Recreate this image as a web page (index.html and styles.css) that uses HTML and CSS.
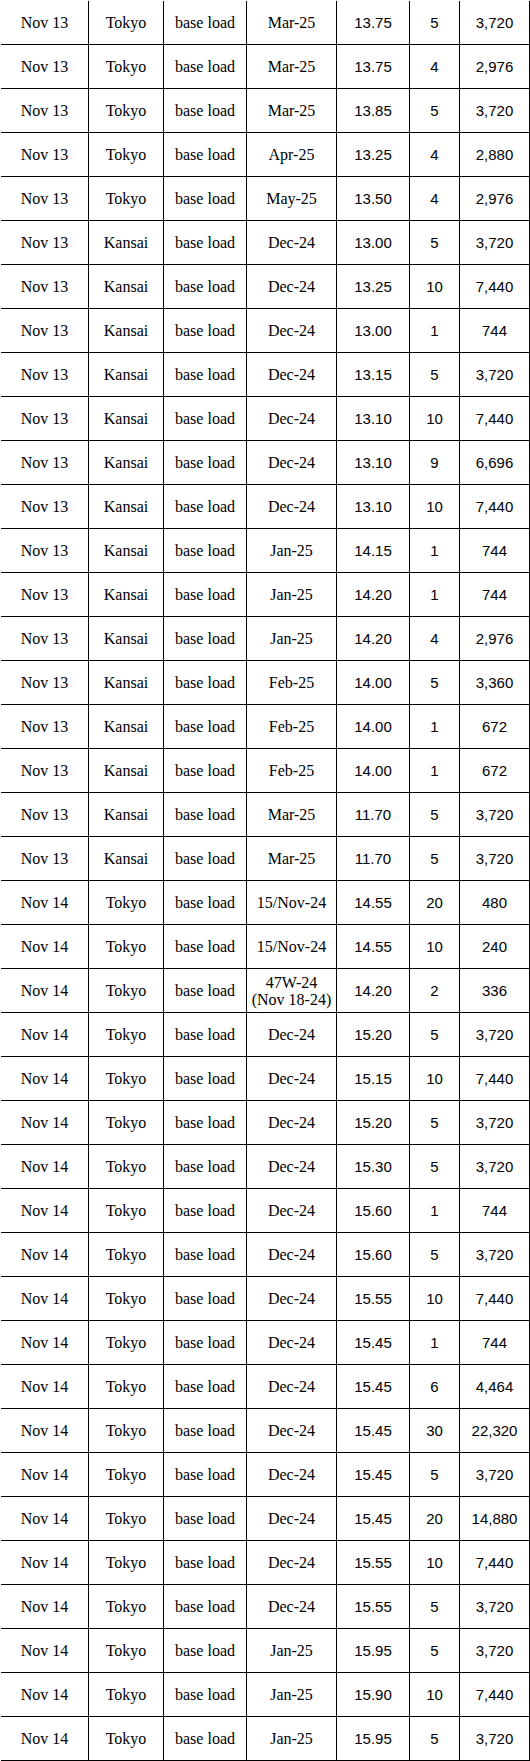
FILE: index.html
```html
<!DOCTYPE html>
<html>
<head>
<meta charset="utf-8">
<link rel="stylesheet" href="styles.css">
</head>
<body>
<table class="trades">
<tbody>
<tr><td class="c1">Nov 13</td><td class="c2">Tokyo</td><td class="c3">base load</td><td class="c4">Mar-25</td><td class="c5">13.75</td><td class="c6">5</td><td class="c7">3,720</td></tr>
<tr><td class="c1">Nov 13</td><td class="c2">Tokyo</td><td class="c3">base load</td><td class="c4">Mar-25</td><td class="c5">13.75</td><td class="c6">4</td><td class="c7">2,976</td></tr>
<tr><td class="c1">Nov 13</td><td class="c2">Tokyo</td><td class="c3">base load</td><td class="c4">Mar-25</td><td class="c5">13.85</td><td class="c6">5</td><td class="c7">3,720</td></tr>
<tr><td class="c1">Nov 13</td><td class="c2">Tokyo</td><td class="c3">base load</td><td class="c4">Apr-25</td><td class="c5">13.25</td><td class="c6">4</td><td class="c7">2,880</td></tr>
<tr><td class="c1">Nov 13</td><td class="c2">Tokyo</td><td class="c3">base load</td><td class="c4">May-25</td><td class="c5">13.50</td><td class="c6">4</td><td class="c7">2,976</td></tr>
<tr><td class="c1">Nov 13</td><td class="c2">Kansai</td><td class="c3">base load</td><td class="c4">Dec-24</td><td class="c5">13.00</td><td class="c6">5</td><td class="c7">3,720</td></tr>
<tr><td class="c1">Nov 13</td><td class="c2">Kansai</td><td class="c3">base load</td><td class="c4">Dec-24</td><td class="c5">13.25</td><td class="c6">10</td><td class="c7">7,440</td></tr>
<tr><td class="c1">Nov 13</td><td class="c2">Kansai</td><td class="c3">base load</td><td class="c4">Dec-24</td><td class="c5">13.00</td><td class="c6">1</td><td class="c7">744</td></tr>
<tr><td class="c1">Nov 13</td><td class="c2">Kansai</td><td class="c3">base load</td><td class="c4">Dec-24</td><td class="c5">13.15</td><td class="c6">5</td><td class="c7">3,720</td></tr>
<tr><td class="c1">Nov 13</td><td class="c2">Kansai</td><td class="c3">base load</td><td class="c4">Dec-24</td><td class="c5">13.10</td><td class="c6">10</td><td class="c7">7,440</td></tr>
<tr><td class="c1">Nov 13</td><td class="c2">Kansai</td><td class="c3">base load</td><td class="c4">Dec-24</td><td class="c5">13.10</td><td class="c6">9</td><td class="c7">6,696</td></tr>
<tr><td class="c1">Nov 13</td><td class="c2">Kansai</td><td class="c3">base load</td><td class="c4">Dec-24</td><td class="c5">13.10</td><td class="c6">10</td><td class="c7">7,440</td></tr>
<tr><td class="c1">Nov 13</td><td class="c2">Kansai</td><td class="c3">base load</td><td class="c4">Jan-25</td><td class="c5">14.15</td><td class="c6">1</td><td class="c7">744</td></tr>
<tr><td class="c1">Nov 13</td><td class="c2">Kansai</td><td class="c3">base load</td><td class="c4">Jan-25</td><td class="c5">14.20</td><td class="c6">1</td><td class="c7">744</td></tr>
<tr><td class="c1">Nov 13</td><td class="c2">Kansai</td><td class="c3">base load</td><td class="c4">Jan-25</td><td class="c5">14.20</td><td class="c6">4</td><td class="c7">2,976</td></tr>
<tr><td class="c1">Nov 13</td><td class="c2">Kansai</td><td class="c3">base load</td><td class="c4">Feb-25</td><td class="c5">14.00</td><td class="c6">5</td><td class="c7">3,360</td></tr>
<tr><td class="c1">Nov 13</td><td class="c2">Kansai</td><td class="c3">base load</td><td class="c4">Feb-25</td><td class="c5">14.00</td><td class="c6">1</td><td class="c7">672</td></tr>
<tr><td class="c1">Nov 13</td><td class="c2">Kansai</td><td class="c3">base load</td><td class="c4">Feb-25</td><td class="c5">14.00</td><td class="c6">1</td><td class="c7">672</td></tr>
<tr><td class="c1">Nov 13</td><td class="c2">Kansai</td><td class="c3">base load</td><td class="c4">Mar-25</td><td class="c5">11.70</td><td class="c6">5</td><td class="c7">3,720</td></tr>
<tr><td class="c1">Nov 13</td><td class="c2">Kansai</td><td class="c3">base load</td><td class="c4">Mar-25</td><td class="c5">11.70</td><td class="c6">5</td><td class="c7">3,720</td></tr>
<tr><td class="c1">Nov 14</td><td class="c2">Tokyo</td><td class="c3">base load</td><td class="c4">15/Nov-24</td><td class="c5">14.55</td><td class="c6">20</td><td class="c7">480</td></tr>
<tr><td class="c1">Nov 14</td><td class="c2">Tokyo</td><td class="c3">base load</td><td class="c4">15/Nov-24</td><td class="c5">14.55</td><td class="c6">10</td><td class="c7">240</td></tr>
<tr><td class="c1">Nov 14</td><td class="c2">Tokyo</td><td class="c3">base load</td><td class="c4 wrap">47W-24<br>(Nov 18-24)</td><td class="c5">14.20</td><td class="c6">2</td><td class="c7">336</td></tr>
<tr><td class="c1">Nov 14</td><td class="c2">Tokyo</td><td class="c3">base load</td><td class="c4">Dec-24</td><td class="c5">15.20</td><td class="c6">5</td><td class="c7">3,720</td></tr>
<tr><td class="c1">Nov 14</td><td class="c2">Tokyo</td><td class="c3">base load</td><td class="c4">Dec-24</td><td class="c5">15.15</td><td class="c6">10</td><td class="c7">7,440</td></tr>
<tr><td class="c1">Nov 14</td><td class="c2">Tokyo</td><td class="c3">base load</td><td class="c4">Dec-24</td><td class="c5">15.20</td><td class="c6">5</td><td class="c7">3,720</td></tr>
<tr><td class="c1">Nov 14</td><td class="c2">Tokyo</td><td class="c3">base load</td><td class="c4">Dec-24</td><td class="c5">15.30</td><td class="c6">5</td><td class="c7">3,720</td></tr>
<tr><td class="c1">Nov 14</td><td class="c2">Tokyo</td><td class="c3">base load</td><td class="c4">Dec-24</td><td class="c5">15.60</td><td class="c6">1</td><td class="c7">744</td></tr>
<tr><td class="c1">Nov 14</td><td class="c2">Tokyo</td><td class="c3">base load</td><td class="c4">Dec-24</td><td class="c5">15.60</td><td class="c6">5</td><td class="c7">3,720</td></tr>
<tr><td class="c1">Nov 14</td><td class="c2">Tokyo</td><td class="c3">base load</td><td class="c4">Dec-24</td><td class="c5">15.55</td><td class="c6">10</td><td class="c7">7,440</td></tr>
<tr><td class="c1">Nov 14</td><td class="c2">Tokyo</td><td class="c3">base load</td><td class="c4">Dec-24</td><td class="c5">15.45</td><td class="c6">1</td><td class="c7">744</td></tr>
<tr><td class="c1">Nov 14</td><td class="c2">Tokyo</td><td class="c3">base load</td><td class="c4">Dec-24</td><td class="c5">15.45</td><td class="c6">6</td><td class="c7">4,464</td></tr>
<tr><td class="c1">Nov 14</td><td class="c2">Tokyo</td><td class="c3">base load</td><td class="c4">Dec-24</td><td class="c5">15.45</td><td class="c6">30</td><td class="c7">22,320</td></tr>
<tr><td class="c1">Nov 14</td><td class="c2">Tokyo</td><td class="c3">base load</td><td class="c4">Dec-24</td><td class="c5">15.45</td><td class="c6">5</td><td class="c7">3,720</td></tr>
<tr><td class="c1">Nov 14</td><td class="c2">Tokyo</td><td class="c3">base load</td><td class="c4">Dec-24</td><td class="c5">15.45</td><td class="c6">20</td><td class="c7">14,880</td></tr>
<tr><td class="c1">Nov 14</td><td class="c2">Tokyo</td><td class="c3">base load</td><td class="c4">Dec-24</td><td class="c5">15.55</td><td class="c6">10</td><td class="c7">7,440</td></tr>
<tr><td class="c1">Nov 14</td><td class="c2">Tokyo</td><td class="c3">base load</td><td class="c4">Dec-24</td><td class="c5">15.55</td><td class="c6">5</td><td class="c7">3,720</td></tr>
<tr><td class="c1">Nov 14</td><td class="c2">Tokyo</td><td class="c3">base load</td><td class="c4">Jan-25</td><td class="c5">15.95</td><td class="c6">5</td><td class="c7">3,720</td></tr>
<tr><td class="c1">Nov 14</td><td class="c2">Tokyo</td><td class="c3">base load</td><td class="c4">Jan-25</td><td class="c5">15.90</td><td class="c6">10</td><td class="c7">7,440</td></tr>
<tr><td class="c1">Nov 14</td><td class="c2">Tokyo</td><td class="c3">base load</td><td class="c4">Jan-25</td><td class="c5">15.95</td><td class="c6">5</td><td class="c7">3,720</td></tr>
</tbody>
</table>
</body>
</html>
```
FILE: styles.css
```css
html, body {
  margin: 0;
  background: #fff;
}
body {
  padding: 1px 0 0 1px;
}
.trades {
  border-collapse: separate;
  border-spacing: 0;
  table-layout: fixed;
  width: 529px;
  color: #000;
  font-family: "Liberation Serif", "DejaVu Serif", serif;
  font-size: 16px;
}
.trades td {
  box-sizing: border-box;
  height: 44px;
  padding: 0;
  border-right: 1px solid #000;
  border-bottom: 1px solid #000;
  text-align: center;
  vertical-align: middle;
  white-space: nowrap;
}
.trades td.wrap {
  line-height: 17px;
}
.c1 { width: 88px; }
.c2 { width: 75px; }
.c3 { width: 83px; }
.c4 { width: 90px; }
.c5 { width: 73px; }
.c6 { width: 50px; }
.c7 { width: 70px; }
.trades td.c5,
.trades td.c6,
.trades td.c7 {
  font-family: "Liberation Sans", Arial, sans-serif;
  font-size: 15px;
}
```
